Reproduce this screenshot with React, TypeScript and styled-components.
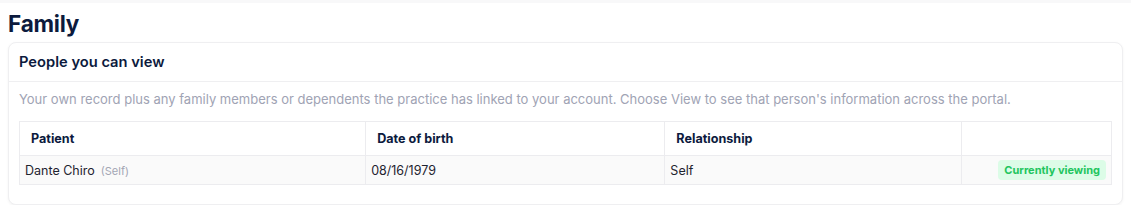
import React from "react";
import styled, { createGlobalStyle } from "styled-components";

const GlobalStyle = createGlobalStyle`
  html, body {
    margin: 0;
    padding: 0;
    background: #ffffff;
    font-family: Inter, "Noto Sans", sans-serif;
  }
`;

export default function App() {
  const people = [
    {
      name: "Dante Chiro",
      note: "(Self)",
      dob: "08/16/1979",
      relationship: "Self",
      current: true,
    },
  ];

  return (
    <>
      <GlobalStyle />
      <TopStrip />
      <Page>
        <Title>Family</Title>
        <Card>
          <CardHeader>People you can view</CardHeader>
          <CardBody>
            <Description>
              Your own record plus any family members or dependents the practice
              has linked to your account. Choose View to see that person's
              information across the portal.
            </Description>
            <Table>
              <colgroup>
                <col style={{ width: "31.7%" }} />
                <col style={{ width: "27.4%" }} />
                <col style={{ width: "27.2%" }} />
                <col />
              </colgroup>
              <thead>
                <tr>
                  <HeadCell>Patient</HeadCell>
                  <HeadCell>Date of birth</HeadCell>
                  <HeadCell>Relationship</HeadCell>
                  <HeadCell />
                </tr>
              </thead>
              <tbody>
                {people.map((p, i) => (
                  <Row key={i}>
                    <Cell>
                      {p.name}
                      <Muted>{p.note}</Muted>
                    </Cell>
                    <Cell>{p.dob}</Cell>
                    <Cell>{p.relationship}</Cell>
                    <Cell $align="right">
                      {p.current && <Badge>Currently viewing</Badge>}
                    </Cell>
                  </Row>
                ))}
              </tbody>
            </Table>
          </CardBody>
        </Card>
      </Page>
    </>
  );
}

const TopStrip = styled.div`
  height: 3px;
  background: #f8f8f9;
`;

const Page = styled.div`
  padding: 0 8px;
`;

const Title = styled.h1`
  margin: 0;
  padding-top: 5px;
  font-size: 22.5px;
  line-height: 32px;
  font-weight: 700;
  color: #0c1a3d;
  letter-spacing: -0.2px;
`;

const Card = styled.div`
  margin-top: 2px;
  border: 1px solid #efeff1;
  border-radius: 8px;
  background: #fff;
  box-shadow: 0 1px 3px rgba(0, 0, 0, 0.05);
`;

const CardHeader = styled.h2`
  margin: 0;
  padding: 0 10px;
  height: 38px;
  display: flex;
  align-items: center;
  font-size: 14.7px;
  font-weight: 600;
  color: #0c1a3d;
  border-bottom: 1px solid #efeff1;
`;

const CardBody = styled.div`
  padding: 8px 10px 19px;
`;

const Description = styled.p`
  margin: 0 0 13px;
  font-size: 13px;
  line-height: 18px;
  color: #a0a3b4;
`;

const Table = styled.table`
  width: 100%;
  border-collapse: collapse;
  table-layout: fixed;
  font-size: 12.5px;
`;

const HeadCell = styled.th`
  height: 33px;
  padding: 0 11px;
  text-align: left;
  font-size: 12.6px;
  font-weight: 700;
  color: #0c1a3d;
  border: 1px solid #ececef;
`;

const Row = styled.tr`
  background: #fafafa;
`;

const Cell = styled.td<{ $align?: "left" | "right" }>`
  height: 28px;
  padding: 0 5px;
  text-align: ${(p) => p.$align || "left"};
  font-size: 12.5px;
  color: #1f2430;
  border: 1px solid #ececef;
`;

const Muted = styled.span`
  margin-left: 6px;
  font-size: 11px;
  color: #a3a6b4;
`;

const Badge = styled.span`
  display: inline-block;
  padding: 3px 6px;
  border-radius: 4px;
  background: #dcfce7;
  color: #22c55e;
  font-size: 11px;
  font-weight: 700;
  line-height: 14px;
`;
